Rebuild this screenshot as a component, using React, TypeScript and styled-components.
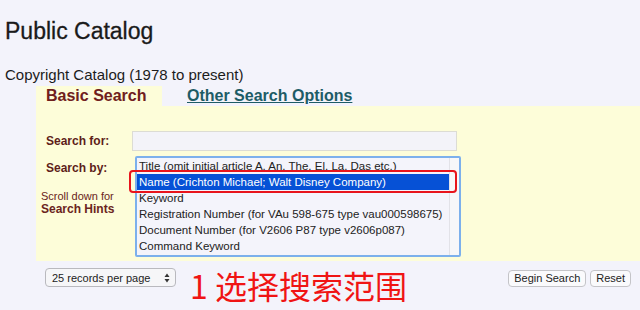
import { createGlobalStyle } from "styled-components"
import styled from "styled-components"

const GlobalStyle = createGlobalStyle`
  html, body {
    margin: 0;
    padding: 0;
    background: #f3f3fb;
    font-family: "Liberation Sans", Arial, sans-serif;
    color: #1c1c1c;
  }
`

const Page = styled.main`
  width: 640px;
  height: 310px;
  overflow: hidden;
`

const Header = styled.div`
  padding: 18px 0 0 5px;
`

const Title = styled.h1`
  margin: 0;
  font-size: 23px;
  font-weight: 400;
  line-height: 26px;
  color: #1a1a1a;
  -webkit-text-stroke: 0.3px #1a1a1a;
`

const Subtitle = styled.p`
  margin: 22px 0 0;
  font-size: 15px;
  line-height: 17px;
`

const SearchArea = styled.section`
  margin: 3px 0 0 36px;
`

const Tabs = styled.div`
  display: flex;
  align-items: flex-end;
  height: 20px;
`

const Tab = styled.div<{ $active?: boolean }>`
  height: 20px;
  box-sizing: border-box;
  padding: 1px 0 0 ${(p) => (p.$active ? "10px" : "0")};
  width: ${(p) => (p.$active ? "126px" : "auto")};
  margin-right: ${(p) => (p.$active ? "25px" : "0")};
  background: ${(p) => (p.$active ? "#fdfdd9" : "transparent")};
  color: ${(p) => (p.$active ? "#70201c" : "#1d5c66")};
  text-decoration: ${(p) => (p.$active ? "none" : "underline")};
  font-size: 16px;
  font-weight: 700;
  line-height: 18px;
`

const Panel = styled.div`
  background: #fdfdd9;
  padding: 25px 0 4px 10px;
  display: grid;
  grid-template-columns: 86px 330px;
  row-gap: 5px;
`

const Label = styled.div`
  font-size: 12px;
  font-weight: 700;
  color: #5e1e1a;
  line-height: 20px;
`

const LabelCol = styled.div`
  display: flex;
  flex-direction: column;
  padding-top: 2px;
`

const Hint = styled.div`
  margin: 12px 0 0 -5px;
  font-size: 11px;
  line-height: 13px;
  color: #6a2420;

  b {
    font-size: 12px;
  }
`

const TextInput = styled.div`
  width: 325px;
  height: 20px;
  box-sizing: border-box;
  background: #f3f3f9;
  border: 1px solid #dcdcd4;
`

const ListWrap = styled.div`
  position: relative;
  margin-left: 3px;
`

const ListBox = styled.div`
  width: 326px;
  height: 101px;
  box-sizing: border-box;
  border: 2px solid #7cb0ec;
  border-radius: 2px;
  background: #f4f4fb;
  display: flex;
  overflow: hidden;
`

const Options = styled.div`
  flex: 1;
`

const Option = styled.div<{ $selected?: boolean }>`
  height: 16px;
  line-height: 16px;
  padding-left: 2px;
  font-size: 11.5px;
  color: ${(p) => (p.$selected ? "#ffffff" : "#222")};
  background: ${(p) => (p.$selected ? "#0651d6" : "transparent")};
  white-space: nowrap;
`

const Scrollbar = styled.div`
  width: 9px;
  border-left: 1px solid #e2e2e8;
  background: #f7f7f9;
`

const Mark = styled.div`
  position: absolute;
  left: -6px;
  top: 14px;
  width: 328px;
  height: 23px;
  box-sizing: border-box;
  border: 2.5px solid #e8141c;
  border-radius: 4px;
  pointer-events: none;
`

const BottomRow = styled.div`
  display: flex;
  align-items: flex-start;
  padding: 6px 9px 0 45px;
`

const PerPage = styled.div`
  width: 131px;
  height: 19px;
  box-sizing: border-box;
  border: 1px solid #b9b9be;
  border-radius: 4px;
  background: #f6f6f8;
  display: flex;
  align-items: center;
  justify-content: space-between;
  padding: 0 5px 0 6px;
  font-size: 11px;
  color: #222;
  margin-top: 1px;
`

const Arrows = styled.svg`
  width: 6px;
  height: 10px;
`

const Note = styled.div`
  margin-left: 14px;
  margin-top: -2px;
  font-family: "Noto Sans CJK SC", "Liberation Sans", sans-serif;
  font-size: 32px;
  line-height: 40px;
  color: #f01414;
  white-space: nowrap;
`

const Buttons = styled.div`
  margin-left: auto;
  display: flex;
  gap: 4px;
  margin-top: 3px;
`

const Button = styled.div`
  height: 17px;
  box-sizing: border-box;
  padding: 0 5px;
  border: 1px solid #c4c4c8;
  border-radius: 4px;
  background: #fafafc;
  font-size: 11px;
  line-height: 15px;
  color: #222;
`

const options = [
  "Title (omit initial article A, An, The, El, La, Das etc.)",
  "Name (Crichton Michael; Walt Disney Company)",
  "Keyword",
  "Registration Number (for VAu 598-675 type vau000598675)",
  "Document Number (for V2606 P87 type v2606p087)",
  "Command Keyword",
]

export default function App() {
  return (
    <Page>
      <GlobalStyle />
      <Header>
        <Title>Public Catalog</Title>
        <Subtitle>Copyright Catalog (1978 to present)</Subtitle>
      </Header>

      <SearchArea>
        <Tabs>
          <Tab $active>Basic Search</Tab>
          <Tab>Other Search Options</Tab>
        </Tabs>
        <Panel>
          <Label>Search for:</Label>
          <TextInput />
          <LabelCol>
            <Label>Search by:</Label>
            <Hint>
              Scroll down for
              <br />
              <b>Search Hints</b>
            </Hint>
          </LabelCol>
          <ListWrap>
            <ListBox>
              <Options>
                {options.map((o, i) => (
                  <Option key={o} $selected={i === 1}>
                    {o}
                  </Option>
                ))}
              </Options>
              <Scrollbar />
            </ListBox>
            <Mark />
          </ListWrap>
        </Panel>
      </SearchArea>

      <BottomRow>
        <PerPage>
          25 records per page
          <Arrows viewBox="0 0 6 10">
            <path d="M3 0.5 L5.5 4 H0.5 Z" fill="#333" />
            <path d="M3 9.5 L5.5 6 H0.5 Z" fill="#333" />
          </Arrows>
        </PerPage>
        <Note>1 选择搜索范围</Note>
        <Buttons>
          <Button>Begin Search</Button>
          <Button>Reset</Button>
        </Buttons>
      </BottomRow>
    </Page>
  )
}
